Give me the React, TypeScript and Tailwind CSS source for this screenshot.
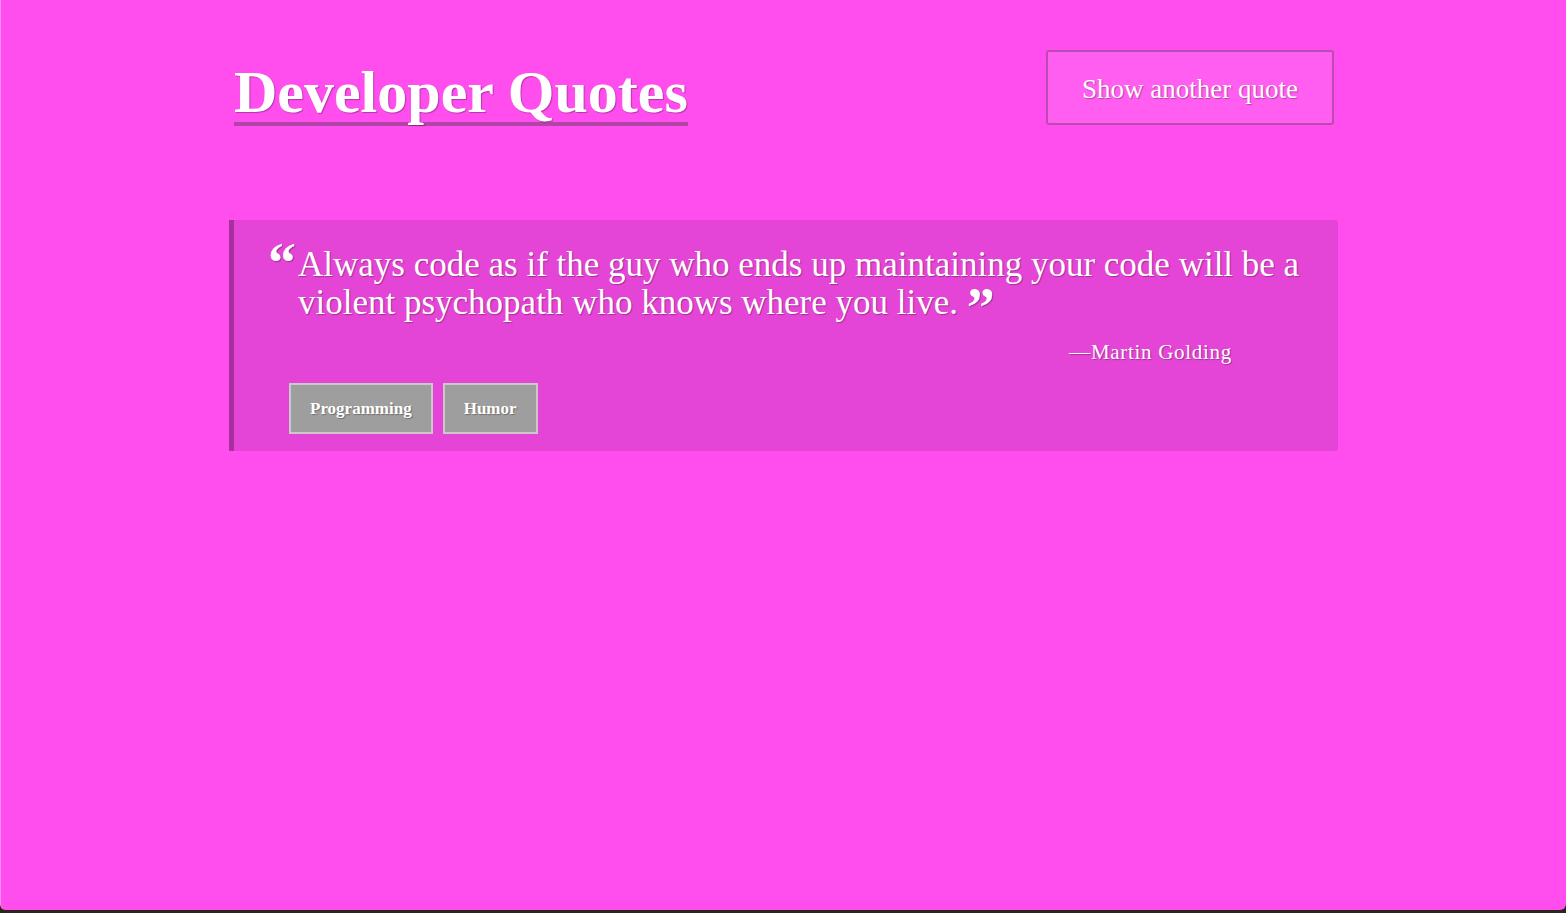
import React from "react";

const shadow = "[text-shadow:1px_1px_1px_rgba(0,0,0,0.3)]";

export default function App() {
  return (
    <div
      className="w-[1566px] h-[913px] bg-[#2e241c] overflow-hidden"
      style={{ fontFamily: '"Liberation Serif", "Times New Roman", serif' }}
    >
      <div className="h-[910px] bg-[#ff4dee] rounded-b-[6px] border-l border-[#ff8cf5] text-white">
        <div className="w-[1109px] mx-auto">
          {/* Header */}
          <div className="flex items-start justify-between pl-[5px] pr-[4px] pt-[50px]">
            <h1
              className={`mt-[12px] text-[60px] leading-[60px] font-bold border-b-[4px] border-[#b044a8] ${shadow}`}
            >
              Developer Quotes
            </h1>
            <button
              className={`w-[288px] h-[75px] pt-[3px] border-2 border-[#bb4bb3] rounded-[3px] bg-[#ff5ef1] text-[27px] text-white ${shadow}`}
            >
              Show another quote
            </button>
          </div>

          {/* Quote card */}
          <div className="mt-[94px] bg-[#e445d6] border-l-[5px] border-[#a8309e] rounded-r-[3px] pt-[26px] pb-[17px]">
            <div className="pl-[64px] pr-[30px]">
              <p className={`relative text-[35px] leading-[38px] ${shadow}`}>
                <span className="absolute left-[-30px] top-[-11px] text-[56px] leading-none font-bold">
                  “
                </span>
                Always code as if the guy who ends up maintaining your code will be a
                <br />
                violent psychopath who knows where you live.{" "}
                <span className="relative top-[13px] text-[56px] leading-[0] font-bold">”</span>
              </p>
            </div>
            <div
              className={`mt-[16px] pr-[106px] text-right text-[21px] leading-[28px] tracking-[0.7px] ${shadow}`}
            >
              —Martin Golding
            </div>
            <div className="mt-[17px] pl-[55px] flex gap-[10px]">
              <span
                className={`h-[51px] px-[19px] flex items-center bg-[#9e9e9e] border-2 border-[#c9c9c9] text-[17px] font-bold ${shadow}`}
              >
                Programming
              </span>
              <span
                className={`h-[51px] px-[19px] flex items-center bg-[#9e9e9e] border-2 border-[#c9c9c9] text-[17px] font-bold ${shadow}`}
              >
                Humor
              </span>
            </div>
          </div>
        </div>
      </div>
    </div>
  );
}
